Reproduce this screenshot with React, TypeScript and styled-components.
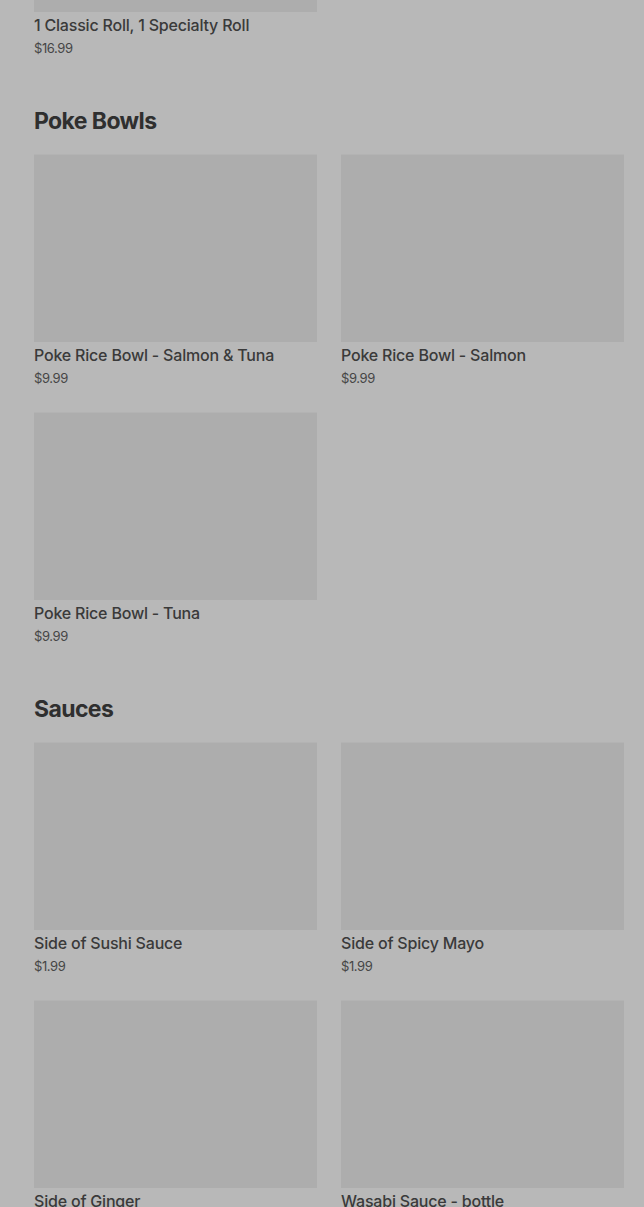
import React from "react";
import styled, { createGlobalStyle } from "styled-components";

const GlobalStyle = createGlobalStyle`
  html, body {
    margin: 0;
    padding: 0;
    background: #b8b8b8;
    overflow: hidden;
  }
  body {
    font-family: Inter, "Liberation Sans", Arial, sans-serif;
  }
`;

interface IItem {
  name: string;
  price: string;
}

interface ISection {
  title?: string;
  items: IItem[];
}

const sections: ISection[] = [
  {
    items: [{ name: "1 Classic Roll, 1 Specialty Roll", price: "$16.99" }],
  },
  {
    title: "Poke Bowls",
    items: [
      { name: "Poke Rice Bowl - Salmon & Tuna", price: "$9.99" },
      { name: "Poke Rice Bowl - Salmon", price: "$9.99" },
      { name: "Poke Rice Bowl - Tuna", price: "$9.99" },
    ],
  },
  {
    title: "Sauces",
    items: [
      { name: "Side of Sushi Sauce", price: "$1.99" },
      { name: "Side of Spicy Mayo", price: "$1.99" },
      { name: "Side of Ginger", price: "$1.99" },
      { name: "Wasabi Sauce - bottle", price: "$1.99" },
    ],
  },
];

// page is scrolled: the first card's image is mostly above the fold
const Page = styled.div`
  margin-top: -176px;
  padding: 0 20px 0 34px;
  display: flex;
  flex-direction: column;
  gap: 51px;
`;

const Section = styled.section`
  display: flex;
  flex-direction: column;
`;

const SectionTitle = styled.h2`
  margin: 0 0 19px;
  font-size: 23px;
  line-height: 28px;
  font-weight: 700;
  letter-spacing: -0.6px;
  color: #2f2f2f;
`;

const Grid = styled.div`
  display: grid;
  grid-template-columns: 283px 283px;
  column-gap: 24px;
  row-gap: 26px;
`;

const Card = styled.div`
  display: flex;
  flex-direction: column;
`;

const Thumb = styled.div`
  height: 188px;
  background: #adadad;
  border-top: 1px solid #b3b3b3;
  box-sizing: border-box;
`;

const ItemName = styled.span`
  margin-top: 2px;
  font-size: 16px;
  line-height: 22px;
  font-weight: 500;
  letter-spacing: -0.2px;
  color: #3a3a3a;
  white-space: nowrap;
`;

const ItemPrice = styled.span`
  margin-top: 4px;
  font-size: 13px;
  line-height: 16px;
  color: #464646;
  letter-spacing: -0.4px;
`;

export default function App() {
  return (
    <>
      <GlobalStyle />
      <Page>
        {sections.map((section, i) => (
          <Section key={section.title ?? i}>
            {section.title && <SectionTitle>{section.title}</SectionTitle>}
            <Grid>
              {section.items.map((item) => (
                <Card key={item.name}>
                  <Thumb />
                  <ItemName>{item.name}</ItemName>
                  <ItemPrice>{item.price}</ItemPrice>
                </Card>
              ))}
            </Grid>
          </Section>
        ))}
      </Page>
    </>
  );
}
